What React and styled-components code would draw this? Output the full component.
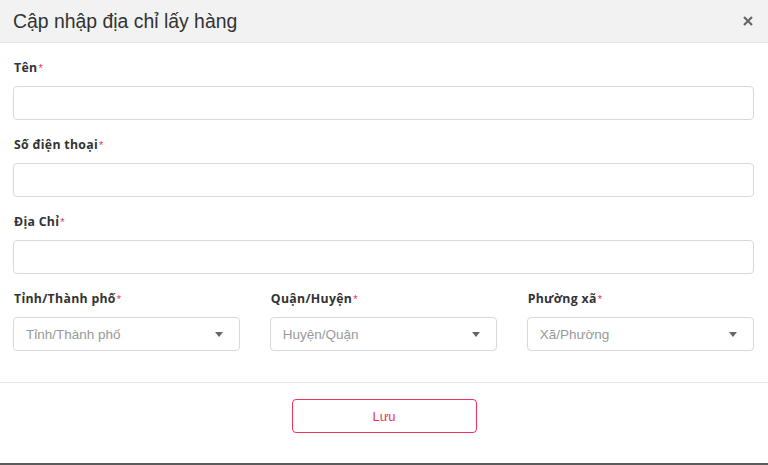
import React from 'react';
import styled, { createGlobalStyle } from 'styled-components';

const GlobalStyle = createGlobalStyle`
  html, body {
    margin: 0;
    padding: 0;
    background: #5c5c5c;
  }
  * {
    box-sizing: border-box;
  }
`;

const Modal = styled.div`
  width: 768px;
  height: 463px;
  background: #fff;
  font-family: "Liberation Sans", Arial, sans-serif;
  color: #333;
  display: flex;
  flex-direction: column;
`;

const Header = styled.div`
  height: 43px;
  background: #f2f2f2;
  border-bottom: 1px solid #e6e6e6;
  display: flex;
  align-items: center;
  justify-content: space-between;
  padding: 0 14px 0 13px;
`;

const Title = styled.h4`
  margin: 0;
  font-size: 19.4px;
  font-weight: 400;
  color: #333;
`;

const Close = styled.button`
  border: none;
  background: none;
  padding: 0;
  width: 12px;
  height: 12px;
  display: flex;
  align-items: center;
  justify-content: center;
  cursor: pointer;
`;

const Body = styled.div`
  padding: 17px 14px 31px 13px;
  border-bottom: 1px solid #e5e5e5;
`;

const Field = styled.div`
  margin-bottom: ${(props) => (props.last ? '0' : '17px')};
`;

const Label = styled.label`
  display: block;
  height: 16px;
  line-height: 16px;
  font-family: "Open Sans", "Liberation Sans", sans-serif;
  font-size: 12.3px;
  font-weight: 700;
  letter-spacing: 0.3px;
  color: #333;
  margin-bottom: 10px;
  padding-left: 1px;
`;

const Required = styled.span`
  font-family: "Liberation Sans", Arial, sans-serif;
  font-size: 11px;
  font-weight: 400;
  color: #f0325a;
  vertical-align: top;
  margin-left: 1px;
`;

const Input = styled.input`
  display: block;
  width: 100%;
  height: 34px;
  border: 1px solid #d9d9d9;
  border-radius: 4px;
  padding: 0 12px;
  font-size: 13px;
  font-family: inherit;
  outline: none;
`;

const Row = styled.div`
  display: grid;
  grid-template-columns: repeat(3, 1fr);
  column-gap: 29.5px;
`;

const Select = styled.div`
  height: 34px;
  border: 1px solid #d9d9d9;
  border-radius: 4px;
  padding: 0 14px 0 12px;
  display: flex;
  align-items: center;
  justify-content: space-between;
`;

const Placeholder = styled.span`
  font-size: 13.5px;
  color: #999;
`;

const Caret = styled.span`
  width: 0;
  height: 0;
  border-left: 4.5px solid transparent;
  border-right: 4.5px solid transparent;
  border-top: 5px solid #666;
  margin-right: 2px;
`;

const Footer = styled.div`
  display: flex;
  justify-content: center;
  padding-top: 16px;
`;

const SaveButton = styled.button`
  width: 185px;
  height: 34px;
  border: 1px solid #f0325a;
  border-radius: 4px;
  background: #fff;
  color: #f0325a;
  font-family: "Liberation Sans", Arial, sans-serif;
  font-size: 13px;
  cursor: pointer;
`;

const textFields = ['Tên', 'Số điện thoại', 'Địa Chỉ'];

const selects = [
  { label: 'Tỉnh/Thành phố', placeholder: 'Tỉnh/Thành phố' },
  { label: 'Quận/Huyện', placeholder: 'Huyện/Quận' },
  { label: 'Phường xã', placeholder: 'Xã/Phường' },
];

function App () {
  return (
    <>
      <GlobalStyle />
      <Modal>
        <Header>
          <Title>Cập nhập địa chỉ lấy hàng</Title>
          <Close aria-label='close'>
            <svg width='10' height='10' viewBox='0 0 10 10'>
              <path d='M1 1L9 9M9 1L1 9' stroke='#666' strokeWidth='2.2' />
            </svg>
          </Close>
        </Header>
        <Body>
          {textFields.map((name) => (
            <Field key={name}>
              <Label>{name}<Required>*</Required></Label>
              <Input />
            </Field>
          ))}
          <Row>
            {selects.map((s) => (
              <Field key={s.label} last>
                <Label>{s.label}<Required>*</Required></Label>
                <Select>
                  <Placeholder>{s.placeholder}</Placeholder>
                  <Caret />
                </Select>
              </Field>
            ))}
          </Row>
        </Body>
        <Footer>
          <SaveButton>Lưu</SaveButton>
        </Footer>
      </Modal>
    </>
  );
}

export default App;
